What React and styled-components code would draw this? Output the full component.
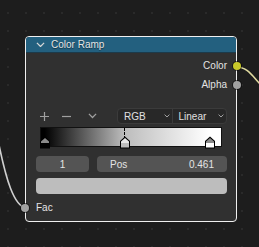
import React from "react";
import styled, { createGlobalStyle } from "styled-components";

const Global = createGlobalStyle`
  html, body { margin: 0; padding: 0; background: #1d1d1d; }
  body { font-family: "Liberation Sans", Arial, sans-serif; }
`;

const Canvas = styled.div`
  position: relative;
  width: 259px;
  height: 247px;
  overflow: hidden;
  background-color: #1d1d1d;
  background-image: radial-gradient(circle, #2a2a2a 0.8px, transparent 1.2px);
  background-size: 18px 18px;
  background-position: -1px 4px;
`;

const Wires = styled.svg`
  position: absolute;
  left: 0;
  top: 0;
`;

const Node = styled.div`
  position: absolute;
  left: 25px;
  top: 36px;
  width: 212px;
  height: 186px;
  box-sizing: border-box;
  border: 1px solid #f0f0f0;
  border-radius: 4px;
  background: #303030;
  display: flex;
  flex-direction: column;
  color: #e4e4e4;
  font-size: 9.5px;
`;

const Header = styled.div`
  height: 17px;
  background: #23607f;
  border-bottom: 1px solid #1c3a4a;
  border-radius: 3px 3px 0 0;
  display: flex;
  align-items: center;
  padding-left: 10px;
  gap: 6px;
  font-size: 10px;
  text-shadow: 0 1px 1px rgba(0,0,0,0.5);
`;

const Body = styled.div`
  display: flex;
  flex-direction: column;
  padding: 3px 9px 4px 10px;
  position: relative;
`;

const SocketRow = styled.div`
  height: 19px;
  display: flex;
  align-items: center;
  justify-content: ${(p) => (p.$out ? "flex-end" : "flex-start")};
  position: relative;
  font-size: 10px;
  margin-top: ${(p) => p.$mt || 0}px;
`;

const Socket = styled.span`
  position: absolute;
  top: 50%;
  width: 8px;
  height: 8px;
  margin-top: -4px;
  border-radius: 50%;
  background: ${(p) => p.$color};
  box-shadow: 0 0 0 1px rgba(0,0,0,0.55);
  ${(p) => (p.$out ? "right: -14px;" : "left: -15px;")}
`;

const Toolbar = styled.div`
  height: 16px;
  margin-top: 14px;
  display: flex;
  align-items: center;
`;

const IconBtn = styled.span`
  width: ${(p) => p.$w}px;
  display: flex;
  justify-content: center;
  align-items: center;
`;

const Dropdowns = styled.div`
  margin-left: auto;
  width: 110px;
  height: 16px;
  box-sizing: border-box;
  display: flex;
  border: 1px solid #3b3b3b;
  border-radius: 4px;
  background: #282828;
`;

const Select = styled.div`
  flex: 1;
  display: flex;
  align-items: center;
  padding: 0 2px 0 6px;
  border-left: ${(p) => (p.$divider ? "1px solid #3b3b3b" : "none")};
  color: #e0e0e0;
  font-size: 10px;
  span { flex: 1; }
`;

const Ramp = styled.div`
  position: relative;
  margin: 3px 5px 0 4px;
  height: 20px;
  box-sizing: border-box;
  border: 1px solid #111;
  background: linear-gradient(to right, #000 2%, #bcbcbc 46.1%, #fff 93.5%, #fff 100%);
`;

const Marker = styled.svg`
  position: absolute;
  bottom: -3px;
`;

const Dotted = styled.div`
  position: absolute;
  top: 0;
  height: 11px;
  width: 0;
  border-left: 1px dashed #000;
`;

const Fields = styled.div`
  display: flex;
  gap: 8px;
  margin-top: 9px;
  height: 16px;
`;

const Field = styled.div`
  ${(p) => (p.$w ? `width: ${p.$w}px; flex: none;` : "flex: 1;")}
  box-sizing: border-box;
  background: #545454;
  border-radius: 4px;
  display: flex;
  align-items: center;
  justify-content: ${(p) => p.$justify || "space-between"};
  padding: 0 ${(p) => p.$pad || 0}px;
  color: #e4e4e4;
  font-size: 10px;
`;

const Swatch = styled.div`
  margin-top: 6px;
  height: 16px;
  border-radius: 4px;
  background: #bdbdbd;
`;

const Chevron = ({ size = 7, color = "#bbb" }) => (
  <svg width={size} height={size * 0.6} viewBox="0 0 10 6">
    <path d="M1 1 L5 5 L9 1" fill="none" stroke={color} strokeWidth="1.4" />
  </svg>
);

const StopMarker = ({ x, fill, selected }) => (
  <Marker width="12" height="13" viewBox="0 0 12 13" style={{ left: x - 6 }}>
    <path d="M1 12.5 V5 L6 0.5 L11 5 V12.5 Z" fill="#000" />
    <path d="M2 5.4 L6 1.9 L10 5.4 V7 H2 Z" fill={selected ? "#e8e8e8" : "#8a8a8a"} />
    <rect x="2" y="7" width="8" height="4.5" fill={fill} />
  </Marker>
);

export default function App() {
  return (
    <>
      <Global />
      <Canvas>
        <Wires width="259" height="247">
          <path d="M236 67 C 248 67, 252 76, 262 86" fill="none" stroke="#e0dba0" strokeWidth="1.6" />
          <path d="M26 208 C 14 206, 6 180, -2 140" fill="none" stroke="#cfcfcf" strokeWidth="1.6" />
        </Wires>
        <Node>
          <Header>
            <Chevron size={9} color="#d8d8d8" />
            <span>Color Ramp</span>
          </Header>
          <Body>
            <SocketRow $out>
              <span>Color</span>
              <Socket $out $color="#c8c82a" />
            </SocketRow>
            <SocketRow $out>
              <span>Alpha</span>
              <Socket $out $color="#a1a1a1" />
            </SocketRow>
            <Toolbar>
              <IconBtn $w={16}>
                <svg width="9" height="9" viewBox="0 0 9 9">
                  <path d="M4.5 0 V9 M0 4.5 H9" stroke="#a0a0a0" strokeWidth="1.2" />
                </svg>
              </IconBtn>
              <IconBtn $w={28}>
                <svg width="9" height="9" viewBox="0 0 9 9">
                  <path d="M0 4.5 H9" stroke="#a0a0a0" strokeWidth="1.2" />
                </svg>
              </IconBtn>
              <IconBtn $w={24}>
                <Chevron size={9} color="#a0a0a0" />
              </IconBtn>
              <Dropdowns>
                <Select>
                  <span>RGB</span>
                  <Chevron size={6} />
                </Select>
                <Select $divider>
                  <span>Linear</span>
                  <Chevron size={6} />
                </Select>
              </Dropdowns>
            </Toolbar>
            <Ramp>
              <Dotted style={{ left: 83 }} />
              <StopMarker x={4} fill="#000" />
              <StopMarker x={84} fill="#bcbcbc" selected />
              <StopMarker x={169} fill="#fff" />
            </Ramp>
            <Fields>
              <Field $w={53} $justify="center">1</Field>
              <Field $pad={13}>
                <span>Pos</span>
                <span>0.461</span>
              </Field>
            </Fields>
            <Swatch />
            <SocketRow $mt={4}>
              <span>Fac</span>
              <Socket $color="#a1a1a1" />
            </SocketRow>
          </Body>
        </Node>
      </Canvas>
    </>
  );
}
